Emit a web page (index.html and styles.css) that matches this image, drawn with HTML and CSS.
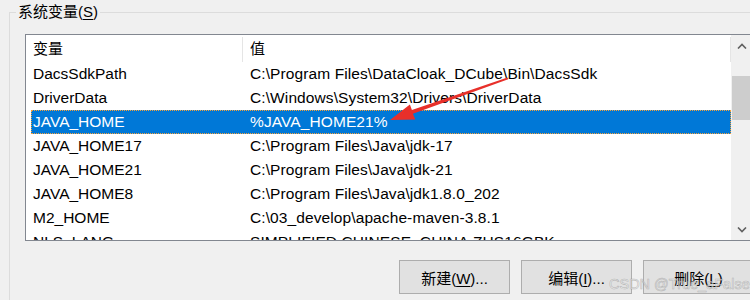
FILE: index.html
```html
<!DOCTYPE html>
<html lang="zh-CN">
<head>
    <meta charset="UTF-8">
    <title>系统变量</title>
    <link rel="stylesheet" href="styles.css">
</head>
<body>
    <fieldset class="group">
        <legend>系统变量(<u>S</u>)</legend>
        <div class="listbox">
            <div class="table">
                <div class="head">
                    <div class="hcell">变量</div>
                    <div class="hcell">值</div>
                </div>
                <div class="rows">
                    <div class="row"><span>DacsSdkPath</span><span>C:\Program Files\DataCloak_DCube\Bin\DacsSdk</span></div>
                    <div class="row"><span>DriverData</span><span>C:\Windows\System32\Drivers\DriverData</span></div>
                    <div class="row selected"><span>JAVA_HOME</span><span>%JAVA_HOME21%</span></div>
                    <div class="row"><span>JAVA_HOME17</span><span>C:\Program Files\Java\jdk-17</span></div>
                    <div class="row"><span>JAVA_HOME21</span><span>C:\Program Files\Java\jdk-21</span></div>
                    <div class="row"><span>JAVA_HOME8</span><span>C:\Program Files\Java\jdk1.8.0_202</span></div>
                    <div class="row"><span>M2_HOME</span><span>C:\03_develop\apache-maven-3.8.1</span></div>
                    <div class="row"><span>NLS_LANG</span><span>SIMPLIFIED CHINESE_CHINA.ZHS16GBK</span></div>
                </div>
            </div>
            <div class="scrollbar">
                <div class="sb-btn">
                    <svg width="10" height="6" viewBox="0 0 10 6"><polyline points="1,5.5 5,1.5 9,5.5" fill="none" stroke="#606060" stroke-width="1.6"/></svg>
                </div>
                <div class="sb-track"><div class="sb-thumb"></div></div>
                <div class="sb-btn">
                    <svg width="10" height="6" viewBox="0 0 10 6"><polyline points="1,0.5 5,4.5 9,0.5" fill="none" stroke="#606060" stroke-width="1.6"/></svg>
                </div>
            </div>
        </div>
        <div class="buttons">
            <button class="btn">新建(<u>W</u>)...</button>
            <button class="btn">编辑(<u>I</u>)...</button>
            <button class="btn">删除(<u>L</u>)</button>
        </div>
    </fieldset>

    <svg class="arrow" width="750" height="300" viewBox="0 0 750 300">
        <polygon fill="#e8302a" points="390,120 409.9,104.4 411.9,110 507.5,77.4 508.2,79.2 412.9,113.8 415.3,119.4"/>
    </svg>

    <div class="watermark">CSDN @True_aFalse</div>
</body>
</html>
```

FILE: styles.css
```css
body {
    margin: 0;
    width: 750px;
    height: 300px;
    overflow: hidden;
    background: #f0f0f0;
    font-family: "Liberation Sans", "Noto Sans CJK SC", sans-serif;
    font-size: 15px;
    color: #000;
    position: relative;
}

.group {
    margin: 2px 0 0 9px;
    padding: 12px 0 0 15px;
    width: 741px;
    height: 298px;
    box-sizing: border-box;
    border: 1px solid #dcdcdc;
    border-right: none;
    border-bottom: none;
    min-width: 0;
    overflow: hidden;
}

.group legend {
    padding: 0 2px;
    margin-left: -9px;
    line-height: 20px;
    height: 20px;
}

u {
    text-decoration-thickness: 1px;
    text-underline-offset: 2px;
}

.listbox {
    display: flex;
    width: 728px;
    height: 207px;
    box-sizing: border-box;
    border: 1px solid #828790;
    background: #fff;
    flex-shrink: 0;
}

.table {
    width: 705px;
    overflow: hidden;
}

.head {
    display: grid;
    grid-template-columns: 217px 488px;
    height: 27px;
}

.hcell {
    margin-top: 2px;
    padding-left: 7px;
    line-height: 23px;
    border-right: 1px solid #e5e5e5;
}

.rows {
    height: 178px;
    overflow: hidden;
    font-size: 15.5px;
}

.row {
    display: grid;
    grid-template-columns: 212px 488px;
    margin-left: 5px;
    width: 700px;
    height: 24px;
    line-height: 24px;
    white-space: nowrap;
}

.row span:first-child {
    padding-left: 2px;
}

.row span:last-child {
    padding-left: 7px;
    letter-spacing: 0.1px;
}

.row.selected {
    background: #0078d7;
    color: #fff;
    outline: 1px dotted #f5a23a;
    outline-offset: -1px;
}

.scrollbar {
    width: 21px;
    display: flex;
    flex-direction: column;
    background: #f0f0f0;
}

.sb-btn {
    height: 21px;
    display: flex;
    align-items: center;
    justify-content: center;
}

.sb-track {
    flex: 1;
    padding-top: 20px;
}

.sb-thumb {
    margin-left: 1px;
    width: 19px;
    height: 44px;
    background: #cdcdcd;
}

.buttons {
    display: flex;
    gap: 11px;
    margin: 19px 0 0 374px;
}

.btn {
    width: 111px;
    height: 34px;
    padding: 0;
    background: #e1e1e1;
    border: 1px solid #adadad;
    border-radius: 0;
    font-family: inherit;
    font-size: 15px;
    color: #000;
    flex-shrink: 0;
}

.arrow {
    position: absolute;
    left: 0;
    top: 0;
}

.watermark {
    position: absolute;
    left: 609px;
    top: 276px;
    font-size: 14.5px;
    color: rgba(250, 250, 250, 0.6);
    -webkit-text-stroke: 0.6px rgba(130, 130, 130, 0.5);
    white-space: nowrap;
}
```
